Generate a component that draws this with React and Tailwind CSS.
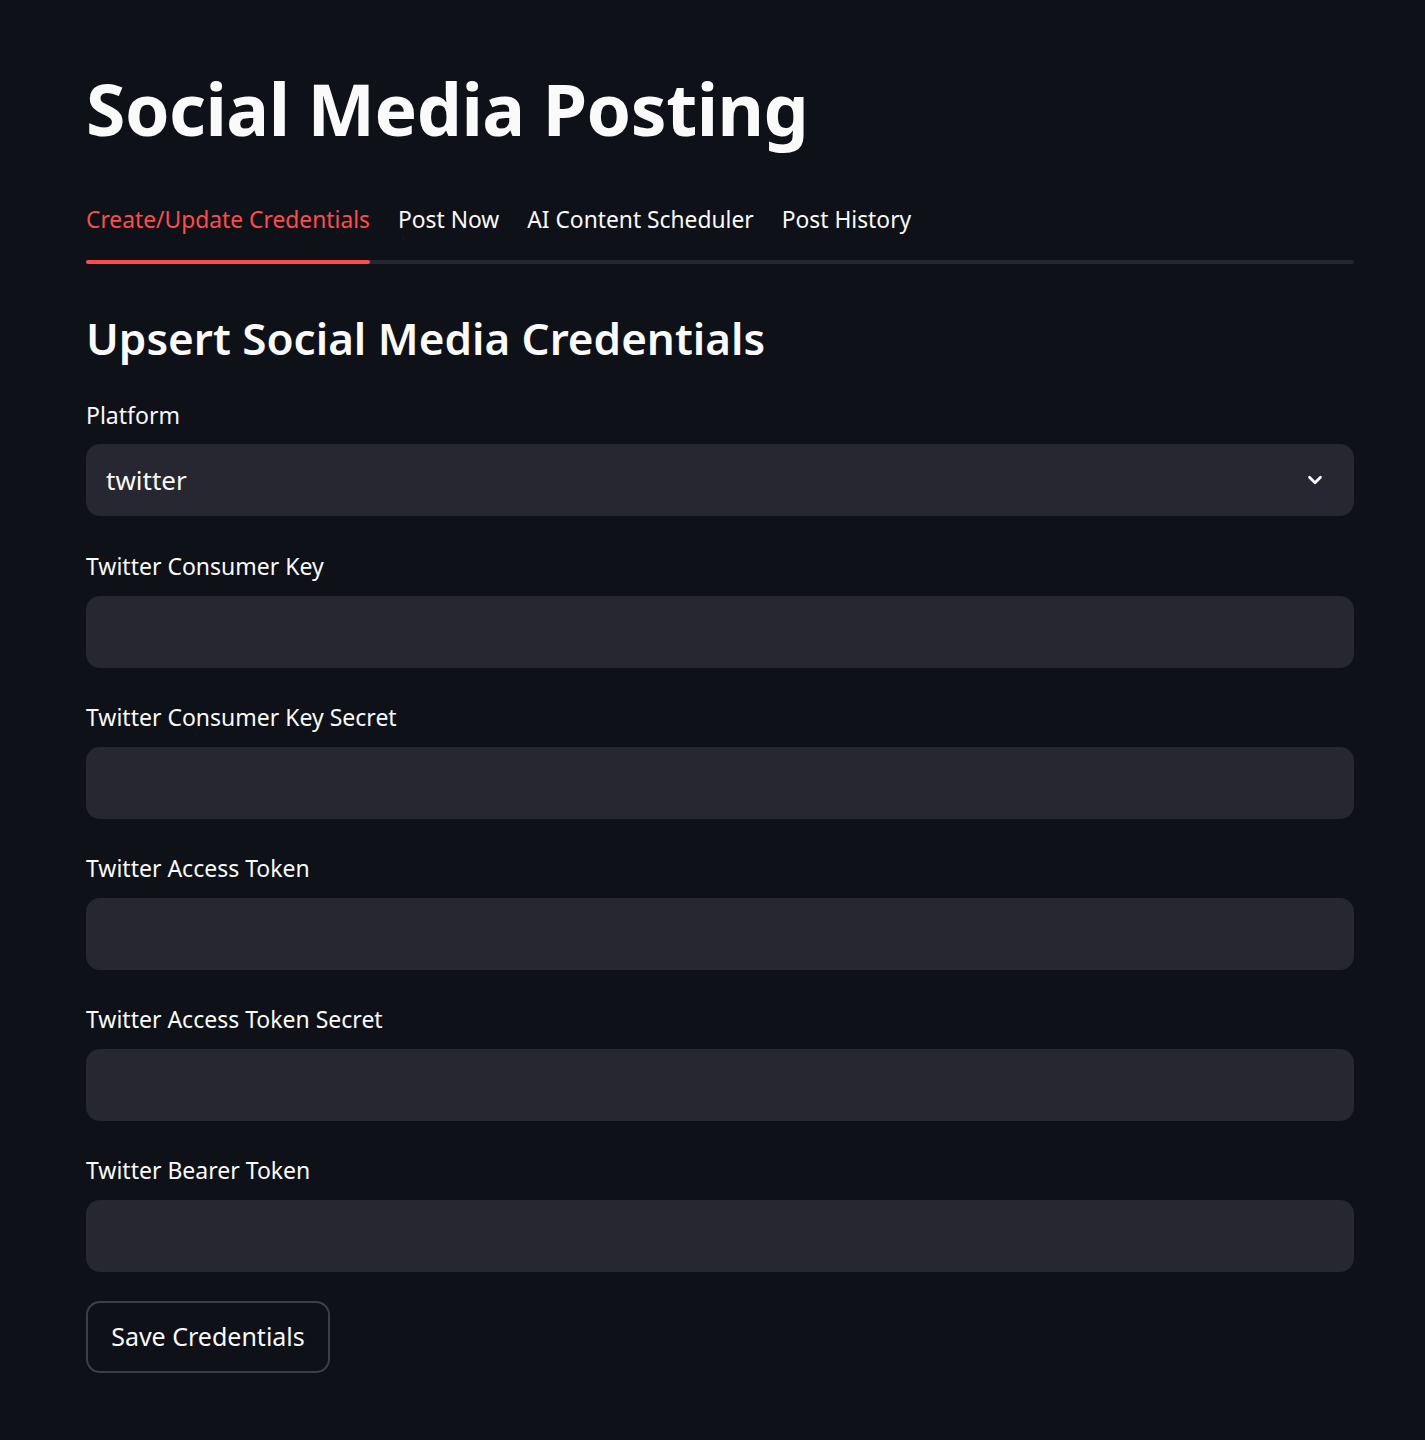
import React, { useState } from "react";

const fields = [
  "Twitter Consumer Key",
  "Twitter Consumer Key Secret",
  "Twitter Access Token",
  "Twitter Access Token Secret",
  "Twitter Bearer Token",
];

const tabs = ["Create/Update Credentials", "Post Now", "AI Content Scheduler", "Post History"];

export default function App() {
  const [active, setActive] = useState(0);

  return (
    <div
      className="min-h-[1440px] w-full bg-[#0e1117] text-[#fafafa] pl-[86px] pr-[71px] pt-[64px]"
      style={{ fontFamily: '"Noto Sans", "Open Sans", sans-serif' }}
    >
      {/* title */}
      <h1 className="text-[71.5px] font-bold leading-[90px] tracking-[-0.5px]">Social Media Posting</h1>

      {/* tabs */}
      <div className="mt-[26px] flex flex-col">
        <div className="flex gap-[28px] h-[80px] items-center">
          {tabs.map((t, i) => (
            <button
              key={t}
              onClick={() => setActive(i)}
              className={
                "relative h-full flex items-center text-[22.8px] leading-none " +
                (active === i ? "text-[#ff4b4b]" : "text-[#fafafa]")
              }
            >
              {t}
              {active === i && (
                <span className="absolute left-0 right-0 bottom-[-4px] h-[4px] bg-[#ff4b4b] rounded-full z-10" />
              )}
            </button>
          ))}
        </div>
        <div className="h-[4px] bg-[#262730] rounded-full" />
      </div>

      {/* subheader */}
      <h2 className="mt-[44px] text-[44px] font-semibold leading-[60px]">Upsert Social Media Credentials</h2>

      {/* platform select */}
      <div className="mt-[32px]">
        <div className="text-[23px] leading-[30px]">Platform</div>
        <div className="mt-[14px] h-[72px] rounded-[14px] bg-[#262730] flex items-center justify-between pl-[20px] pr-[28px]">
          <span className="text-[26px]">twitter</span>
          <svg width="22" height="22" viewBox="0 0 24 24" fill="none" stroke="#fafafa" strokeWidth="3" strokeLinecap="round" strokeLinejoin="round">
            <path d="M6 9l6 6 6-6" />
          </svg>
        </div>
      </div>

      {fields.map((f, i) => (
        <div key={f} className={i === 0 ? "mt-[35px]" : "mt-[34px]"}>
          <div className="text-[23px] leading-[30px]">{f}</div>
          <div className="mt-[15px] h-[72px] rounded-[14px] bg-[#262730]" />
        </div>
      ))}

      <button className="mt-[29px] h-[72px] w-[244px] rounded-[14px] border-2 border-[#3d3f48] bg-[#0e1117] text-[25px] text-[#fafafa]">
        Save Credentials
      </button>
    </div>
  );
}
